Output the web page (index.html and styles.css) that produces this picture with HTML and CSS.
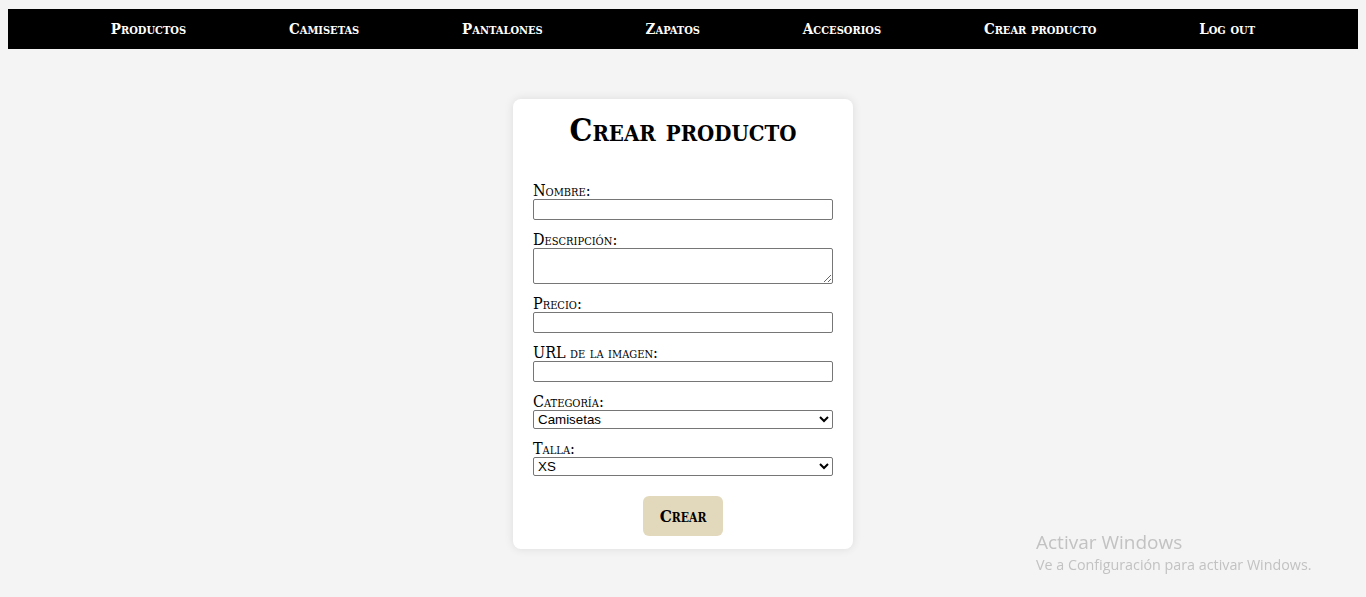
FILE: index.html
```html
<!DOCTYPE html>
<html lang="es">
<head>
<meta charset="utf-8">
<title>Crear producto</title>
<link rel="stylesheet" href="styles.css">
</head>
<body>
<nav class="nav">
  <a href="#">Productos</a>
  <a href="#">Camisetas</a>
  <a href="#">Pantalones</a>
  <a href="#">Zapatos</a>
  <a href="#">Accesorios</a>
  <a href="#">Crear producto</a>
  <a href="#">Log out</a>
</nav>
<main class="main">
  <form class="card">
    <h1 class="title">Crear producto</h1>
    <div class="group">
      <label class="label" for="nombre">Nombre:</label>
      <input class="field" id="nombre" type="text">
    </div>
    <div class="group">
      <label class="label" for="desc">Descripción:</label>
      <textarea class="field area" id="desc"></textarea>
    </div>
    <div class="group">
      <label class="label" for="precio">Precio:</label>
      <input class="field" id="precio" type="text">
    </div>
    <div class="group">
      <label class="label" for="url">URL de la imagen:</label>
      <input class="field" id="url" type="text">
    </div>
    <div class="group">
      <label class="label" for="cat">Categoría:</label>
      <select class="select" id="cat"><option>Camisetas</option></select>
    </div>
    <div class="group">
      <label class="label" for="talla">Talla:</label>
      <select class="select" id="talla"><option>XS</option></select>
    </div>
    <div class="actions">
      <button class="btn" type="button">Crear</button>
    </div>
  </form>
</main>
<div class="watermark">
  <div class="wm-title">Activar Windows</div>
  <div class="wm-sub">Ve a Configuración para activar Windows.</div>
</div>
</body>
</html>
```
FILE: styles.css
```css
html { background: #f4f4f4; }
body {
  margin: 0;
  padding: 9px 8px 8px;
  background: #f4f4f4;
  font-family: "DejaVu Serif", "Liberation Serif", serif;
  font-stretch: condensed;
}
.nav {
  background: #000;
  height: 40px;
  display: flex;
  justify-content: space-evenly;
  align-items: center;
}
.nav a {
  color: #fff;
  text-decoration: none;
  font-variant: small-caps;
  font-weight: bold;
  font-size: 15px;
}
.main {
  display: flex;
  justify-content: center;
  padding-top: 50px;
}
.card {
  width: 340px;
  box-sizing: border-box;
  background: #fff;
  border-radius: 8px;
  box-shadow: 0 0 10px rgba(0,0,0,0.1);
  padding: 12px 20px 13px;
}
.title {
  margin: 0 0 33px;
  text-align: center;
  font-variant: small-caps;
  font-size: 32px;
  font-weight: bold;
}
.group { margin-bottom: 11px; }
.label {
  display: block;
  font-variant: small-caps;
  font-size: 16px;
  line-height: 17px;
  color: #000;
}
.field {
  display: block;
  width: 100%;
  height: 21px;
  box-sizing: border-box;
  border: 1px solid #767676;
  border-radius: 2px;
  margin: 0;
  padding: 1px 2px;
}
.area { height: 36px; resize: vertical; }
.select {
  display: block;
  width: 100%;
  height: 19px;
  box-sizing: border-box;
  margin: 0;
  font-family: "Liberation Sans", Arial, sans-serif;
  font-size: 13.33px;
  border: 1px solid #767676;
  border-radius: 2px;
  background: #fff;
  color: #000;
}
.actions {
  display: flex;
  justify-content: center;
  padding-top: 9px;
}
.btn {
  width: 80px;
  height: 40px;
  border: none;
  border-radius: 6px;
  background: #e2d9bc;
  font-family: "DejaVu Serif", "Liberation Serif", serif;
  font-stretch: condensed;
  font-variant: small-caps;
  font-weight: bold;
  font-size: 17px;
  color: #000;
}
.watermark {
  position: fixed;
  left: 1036px;
  top: 530px;
  color: #c2c2c2;
  font-family: "Open Sans", "Noto Sans", sans-serif;
  font-stretch: normal;
}
.wm-title { font-size: 19px; line-height: 24px; }
.wm-sub { font-size: 14.3px; line-height: 20px; margin-top: 1px; }
```
